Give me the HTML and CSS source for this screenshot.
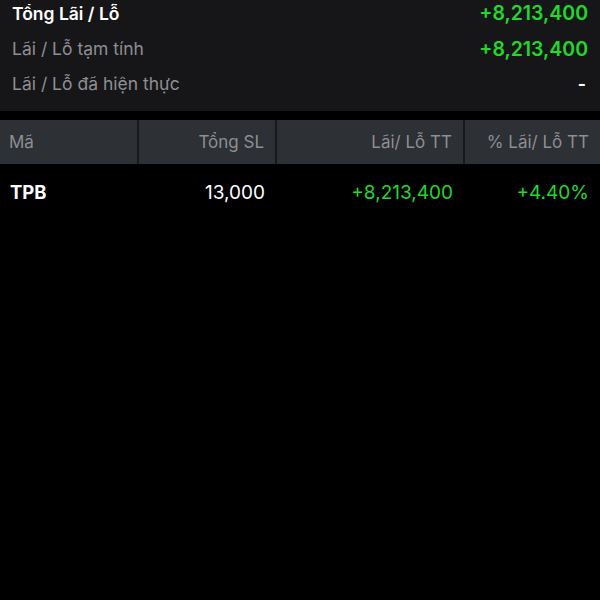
FILE: index.html
```html
<!DOCTYPE html>
<html>
  <head>
    <title>Lãi / Lỗ</title>
    <link rel="stylesheet" href="styles.css">
  </head>
  <body>
    <div class="summary">
      <div class="summary-row total">
        <span>Tổng Lãi / Lỗ</span>
        <span class="up">+8,213,400</span>
      </div>
      <div class="summary-row">
        <span>Lãi / Lỗ tạm tính</span>
        <span class="up">+8,213,400</span>
      </div>
      <div class="summary-row">
        <span>Lãi / Lỗ đã hiện thực</span>
        <span class="dash">-</span>
      </div>
    </div>

    <table class="pnl">
      <tr class="head">
        <th class="col-code">Mã</th>
        <th class="col-qty">Tổng SL</th>
        <th class="col-pl">Lãi/ Lỗ TT</th>
        <th class="col-pct">% Lãi/ Lỗ TT</th>
      </tr>
      <tr>
        <td class="code">TPB</td>
        <td>13,000</td>
        <td class="up">+8,213,400</td>
        <td class="up">+4.40%</td>
      </tr>
    </table>
  </body>
</html>
```

FILE: styles.css
```css
body {
  margin: 0;
  background-color: #000;
  color: #fff;
  font-family: Inter, "Noto Sans", sans-serif;
  font-size: 17px;
}

.summary {
  background-color: #161618;
  padding: 0 12px 0 12px;
  height: 111px;
  margin-bottom: 9px;
}

.summary-row {
  display: flex;
  justify-content: space-between;
  align-items: center;
  height: 35px;
  color: #8e8e93;
  font-size: 17.5px;
}

.summary-row.total {
  height: 26px;
  padding-bottom: 5px;
  color: #fff;
  font-weight: 600;
}

.up {
  color: #20d92b;
}

.summary .up {
  font-weight: 600;
  font-size: 19.5px;
}

.dash {
  color: #fff;
  font-weight: 700;
  margin-right: 2px;
}

table.pnl {
  width: 100%;
  border-collapse: collapse;
}

tr.head th {
  height: 44px;
  padding: 0 11px 0 9px;
  background-color: #2d3034;
  color: #8e8e93;
  font-weight: 400;
  text-align: right;
  border-left: 2px solid #17191b;
}

tr.head th:first-child {
  border-left: none;
  text-align: left;
}

.col-code { width: 117px; }
.col-qty { width: 116px; }
.col-pl { width: 166px; }

td {
  height: 56px;
  padding: 0 11px 0 10px;
  text-align: right;
  font-size: 19px;
}

td.code {
  text-align: left;
  font-weight: 700;
  font-size: 18.5px;
}
```
